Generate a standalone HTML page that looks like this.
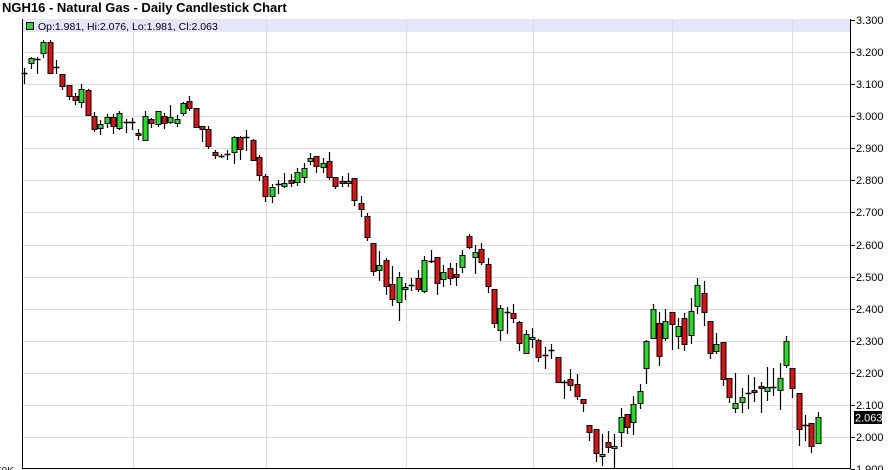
<!DOCTYPE html>
<html><head><meta charset="utf-8"><style>
body{margin:0;background:#fff;width:889px;height:470px;overflow:hidden;font-family:"Liberation Sans",Arial,sans-serif}
</style></head><body>
<svg id="s" width="889" height="470" xmlns="http://www.w3.org/2000/svg" style="position:absolute;left:0;top:0">
<text x="2" y="12" font-family="Liberation Sans, Arial, sans-serif" font-weight="bold" font-size="13" fill="#000">NGH16 - Natural Gas - Daily Candlestick Chart</text>
<rect x="22" y="19" width="829" height="13" fill="#e6e6fa"/>
<g id="grid"></g>
<rect x="26.5" y="22.5" width="7" height="7" fill="#22dd22" stroke="#000" stroke-width="1"/>
<text x="38" y="30" font-family="Liberation Sans, Arial, sans-serif" font-size="10.5" fill="#000">Op:1.981, Hi:2.076, Lo:1.981, Cl:2.063</text>
<g id="c"></g>
<line x1="22.5" y1="19" x2="22.5" y2="469" stroke="#000"/>
<line x1="850.5" y1="19" x2="850.5" y2="469" stroke="#000"/>
<line x1="22" y1="468.5" x2="851" y2="468.5" stroke="#000"/>
<g id="ax"></g>
<rect x="854" y="411" width="28" height="13" fill="#000"/>
<text x="855" y="421.5" font-family="Liberation Sans, Arial, sans-serif" font-size="11" fill="#fff">2.063</text>
<text x="-4" y="474" font-family="Liberation Sans, Arial, sans-serif" font-size="10" fill="#000">50K</text>
</svg>
<script>
var NS="http://www.w3.org/2000/svg";
function el(p,t,a){var e=document.createElementNS(NS,t);for(var k in a)e.setAttribute(k,a[k]);p.appendChild(e);return e;}
var g=document.getElementById('grid'),ax=document.getElementById('ax');
[133,266,406,533,672,792].forEach(function(x){el(g,'line',{x1:x+.5,y1:19,x2:x+.5,y2:468,stroke:'#dcdcdc'});});
for(var i=0;i<=14;i++){var y=Math.round(20+i*32.08);var p=(3.3-i*0.1).toFixed(3);
 if(i>0&&i<14)el(g,'line',{x1:23,y1:y+.5,x2:850,y2:y+.5,stroke:'#dcdcdc'});
 el(ax,'line',{x1:851,y1:y+.5,x2:855,y2:y+.5,stroke:'#000'});
 var t=el(ax,'text',{x:856,y:y+4,'font-size':11,'font-family':'Liberation Sans, Arial, sans-serif',fill:'#000'});t.textContent=p;}
var D=[[24,'d',68,83,73,73],[31,'g',57,68,58,63],[37,'d',57,73,59,59],[43,'g',40,57,42,53],[50,'r',40,73,42,73],[56,'d',60,73,67,67],
[62,'r',74,89,74,86],[69,'r',85,99,85,96],[75,'r',93,104,96,100],[81,'g',84,107,89,102],[88,'r',89,115,90,115],[94,'r',112,131,116,129],
[100,'g',120,134,124,128],[107,'g',114,127,117,123],[113,'r',114,133,117,126],[119,'g',111,129,113,128],[126,'d',119,132,122,122],[132,'d',118,129,122,122],
[138,'r',129,139,133,135],[145,'g',111,140,116,140],[151,'r',118,127,119,123],[158,'g',111,126,111,124],[164,'r',113,128,116,123],[170,'g',105,123,117,122],
[177,'g',115,126,119,123],[183,'g',102,115,103,113],[189,'r',96,110,101,108],[196,'r',108,127,108,127],[202,'r',126,141,126,129],[208,'r',126,148,129,146],
[215,'r',150,158,152,155],[221,'d',154,157,156,156],[227,'d',150,159,154,154],[234,'g',136,163,137,152],[240,'r',136,159,137,149],[246,'d',130,150,137,137],
[253,'r',139,160,140,160],[259,'r',155,180,157,175],[265,'r',174,201,176,196],[272,'g',184,202,187,196],[278,'d',180,193,184,184],[284,'g',173,187,183,186],
[291,'r',174,186,180,183],[297,'g',168,185,172,182],[304,'g',163,182,168,177],[310,'g',153,164,158,161],[316,'r',156,172,156,166],[323,'g',158,172,163,167],
[329,'r',152,179,161,177],[335,'r',177,188,177,186],[342,'r',176,186,181,183],[348,'g',173,186,181,183],[354,'r',178,205,178,200],[361,'r',196,216,203,209],
[367,'r',213,240,216,237],[373,'r',243,275,243,271],[379,'g',251,280,265,270],[386,'r',258,294,260,286],[392,'r',266,305,284,299],[399,'g',272,320,277,302],
[405,'g',283,299,287,289],[411,'d',278,290,285,285],[418,'r',270,291,278,289],[424,'g',256,292,260,291],[431,'d',250,262,261,261],[437,'r',257,294,257,283],
[443,'g',265,286,272,279],[450,'r',263,284,268,278],[456,'r',263,285,274,277],[462,'g',250,272,255,267],[469,'r',234,248,236,247],[475,'g',245,273,252,257],
[481,'r',243,264,249,262],[488,'r',258,292,264,286],[494,'r',289,327,289,323],[500,'g',305,340,308,330],[507,'d',307,333,312,312],[513,'r',304,322,313,318],
[519,'r',321,350,322,343],[526,'g',330,353,334,353],[532,'g',328,347,337,339],[538,'r',339,361,340,357],[545,'d',347,368,355,355],[551,'d',344,358,350,350],
[558,'r',357,382,357,382],[564,'d',380,398,382,382],[570,'r',369,390,379,385],[577,'r',374,399,384,396],[583,'r',399,411,399,403],[589,'r',425,440,425,432],
[596,'r',429,461,429,453],[602,'g',434,465,454,456],[608,'r',431,452,442,447],[614,'g',434,467,446,448],[621,'g',408,446,417,432],[627,'r',414,433,414,427],
[633,'g',396,434,404,422],[640,'g',384,408,391,403],[646,'g',340,383,341,368],[653,'g',304,338,309,338],[659,'r',312,365,323,356],[665,'g',309,340,321,338],
[672,'r',312,349,312,324],[678,'g',318,348,326,336],[684,'r',313,350,318,344],[691,'g',298,343,311,335],[697,'g',278,313,285,306],[704,'r',281,325,293,312],
[710,'r',321,358,321,353],[716,'g',333,353,344,351],[723,'r',342,385,342,379],[729,'r',378,402,378,397],[735,'g',373,412,403,408],[742,'g',388,412,397,402],
[748,'d',375,408,393,393],[754,'r',377,401,390,392],[761,'r',382,412,386,387],[767,'g',367,400,387,391],[773,'d',368,395,387,387],[780,'g',363,409,378,390],
[786,'g',336,367,341,365],[792,'r',368,397,368,388],[799,'r',393,445,393,429],[805,'d',415,440,425,425],[811,'r',423,452,423,446],[818,'g',412,443,417,443]];
var c=document.getElementById('c');
D.forEach(function(d){var x=d[0];
 el(c,'line',{x1:x+.5,y1:d[2],x2:x+.5,y2:d[3]+1,stroke:'#000','stroke-width':1.2});
 if(d[1]=='d'){el(c,'line',{x1:x-2.5,y1:d[4]+.5,x2:x+3.5,y2:d[4]+.5,stroke:'#000','stroke-width':1.5});}
 else{var h=Math.max(2,d[5]-d[4]);el(c,'rect',{x:x-2,y:d[4]+.5,width:5,height:h,fill:d[1]=='g'?'#22dd22':'#dd1111',stroke:'#000','stroke-width':1});}
});
</script>
</body></html>
